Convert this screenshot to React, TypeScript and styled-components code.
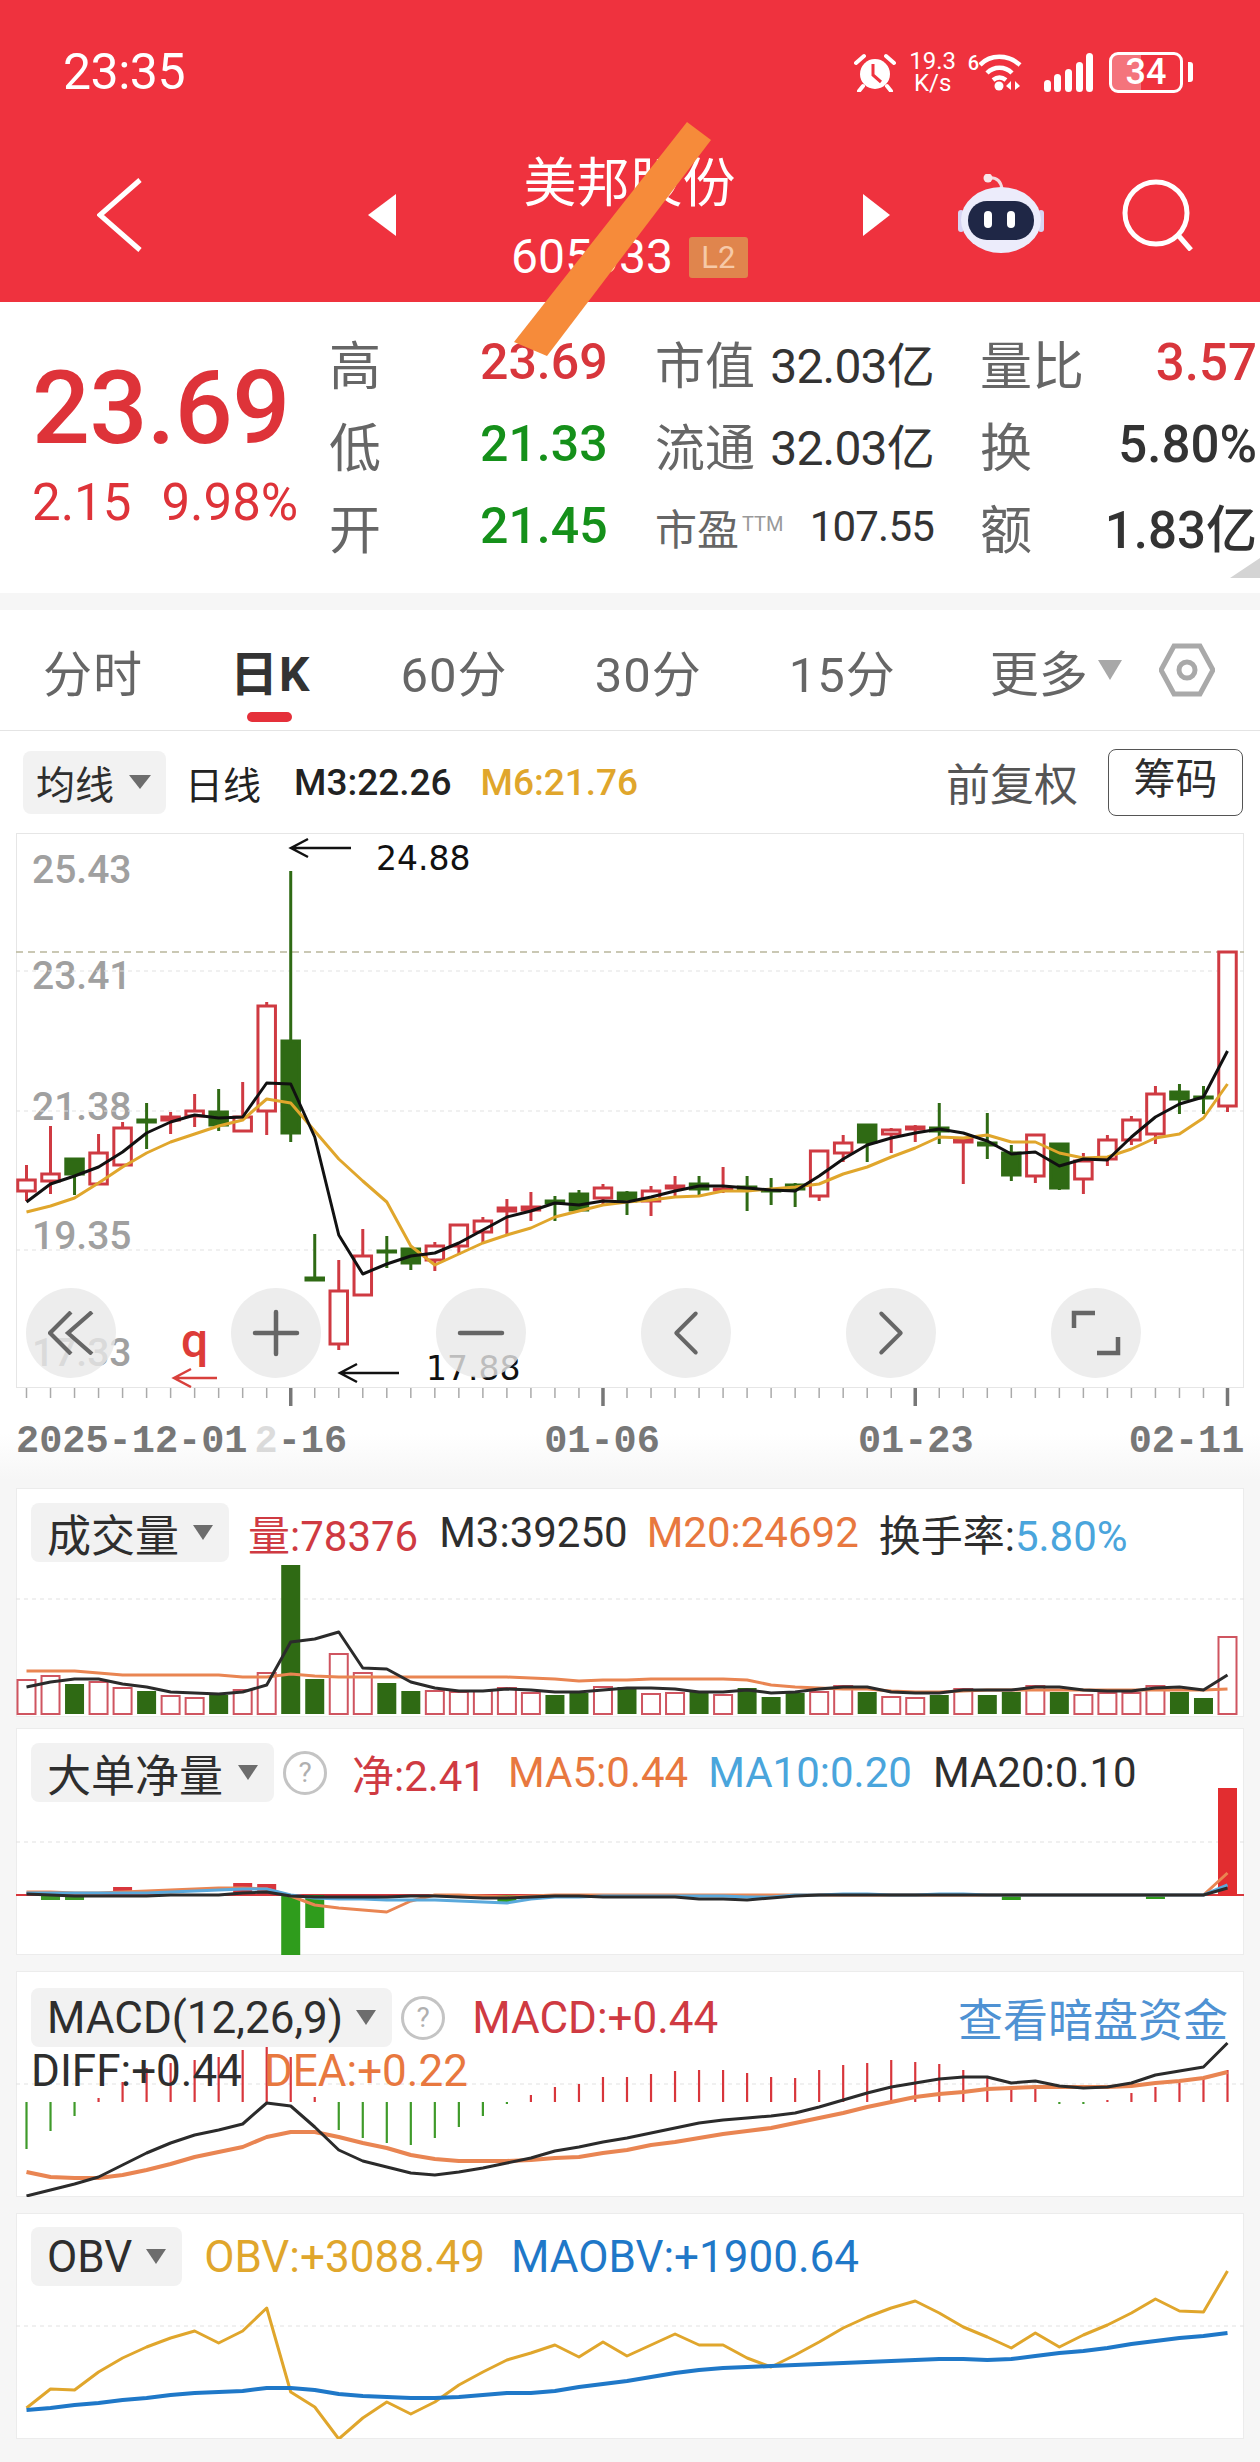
import styled, { createGlobalStyle } from 'styled-components';
import { ChevronLeft, ChevronRight, Minus, Plus } from 'lucide-react';

const GlobalStyle = createGlobalStyle`
	html, body { margin: 0; padding: 0; background: #f6f6f6; }
	body { font-family: Roboto, "Noto Sans CJK SC", sans-serif; }
`;

const RED = '#cf3a42';
const GREEN = '#2f6a14';
const ORANGE = '#e8783f';
const SKY = '#4aa5dc';
const INK = '#2e2e2e';
const GOLD = '#e0a62c';

const X = (i: number) => 26.5 + i * 24.02;
const pts = (ys: number[]) => ys.map((y, i) => `${X(i)},${y}`).join(' ');

type Candle = ['r' | 'g', number, number, number, number];

const candles: Candle[] = [
	['r', 1180, 1191, 1165, 1201], ['r', 1174, 1181, 1126, 1194], ['g', 1159, 1174, 1159, 1195],
	['r', 1153, 1184, 1134, 1184], ['r', 1128, 1165, 1122, 1165], ['g', 1120, 1122, 1103, 1149],
	['r', 1117, 1120, 1112, 1134], ['r', 1111, 1116, 1094, 1127], ['g', 1112, 1125, 1089, 1131],
	['r', 1117, 1131, 1082, 1131], ['r', 1006, 1111, 1002, 1135], ['g', 1041, 1133, 871, 1142],
	['g', 1278, 1280, 1234, 1280], ['r', 1291, 1344, 1260, 1350], ['r', 1256, 1295, 1229, 1295],
	['g', 1251, 1252, 1236, 1268], ['g', 1249, 1263, 1249, 1270], ['r', 1246, 1260, 1242, 1271],
	['r', 1225, 1246, 1225, 1255], ['r', 1221, 1232, 1217, 1243], ['r', 1208, 1211, 1199, 1235],
	['r', 1207, 1210, 1192, 1221], ['g', 1201, 1203, 1196, 1221], ['g', 1194, 1210, 1190, 1212],
	['r', 1188, 1198, 1184, 1204], ['g', 1193, 1201, 1191, 1215], ['r', 1191, 1201, 1186, 1216],
	['r', 1186, 1188, 1176, 1197], ['g', 1184, 1189, 1176, 1196], ['r', 1189, 1190, 1167, 1193],
	['g', 1187, 1189, 1176, 1211], ['g', 1190, 1191, 1178, 1205], ['g', 1185, 1189, 1183, 1207],
	['r', 1151, 1196, 1151, 1201], ['r', 1143, 1153, 1135, 1162], ['g', 1125, 1142, 1125, 1162],
	['r', 1130, 1134, 1128, 1153], ['r', 1127, 1129, 1125, 1142], ['g', 1128, 1131, 1103, 1144],
	['r', 1139, 1142, 1137, 1184], ['g', 1143, 1145, 1113, 1159], ['g', 1153, 1175, 1145, 1181],
	['r', 1135, 1176, 1135, 1183], ['g', 1144, 1188, 1144, 1190], ['r', 1161, 1179, 1153, 1194],
	['r', 1140, 1159, 1135, 1166], ['r', 1120, 1140, 1116, 1145], ['r', 1094, 1134, 1086, 1144],
	['g', 1092, 1099, 1084, 1114], ['g', 1097, 1098, 1086, 1114], ['r', 952, 1106, 952, 1112],
];

const m3 = [1202, 1184, 1176, 1167, 1152, 1133, 1122, 1115, 1118, 1117, 1083, 1084, 1137, 1235, 1274, 1264, 1256, 1253, 1243, 1230, 1217, 1211, 1203, 1205, 1201, 1202, 1197, 1191, 1186, 1186, 1188, 1190, 1191, 1176, 1159, 1145, 1138, 1133, 1129, 1133, 1141, 1154, 1152, 1166, 1159, 1160, 1137, 1117, 1104, 1097, 1051];
const m6 = [1212, 1206, 1198, 1183, 1167, 1153, 1142, 1134, 1126, 1120, 1099, 1103, 1131, 1159, 1181, 1202, 1246, 1265, 1254, 1243, 1235, 1228, 1217, 1211, 1205, 1202, 1200, 1197, 1196, 1191, 1191, 1189, 1187, 1184, 1174, 1167, 1157, 1148, 1137, 1138, 1135, 1142, 1142, 1153, 1158, 1157, 1149, 1138, 1134, 1118, 1084];

const volTops = [1680, 1676, 1684, 1682, 1688, 1691, 1696, 1698, 1695, 1690, 1673, 1565, 1679, 1654, 1673, 1683, 1691, 1691, 1692, 1691, 1688, 1693, 1695, 1693, 1687, 1687, 1694, 1693, 1692, 1695, 1688, 1697, 1693, 1692, 1686, 1692, 1697, 1698, 1695, 1689, 1695, 1692, 1686, 1692, 1695, 1693, 1693, 1686, 1692, 1698, 1637];
const volGreen = new Set([2, 5, 8, 11, 12, 15, 16, 22, 23, 25, 28, 30, 31, 32, 35, 38, 40, 41, 43, 48, 49]);
const volM3 = [1687, 1682, 1679, 1679, 1684, 1687, 1692, 1693, 1694, 1692, 1685, 1642, 1639, 1632, 1668, 1669, 1682, 1688, 1691, 1691, 1689, 1690, 1692, 1692, 1690, 1688, 1688, 1689, 1692, 1692, 1690, 1693, 1692, 1689, 1687, 1687, 1692, 1693, 1693, 1690, 1690, 1690, 1687, 1687, 1690, 1691, 1691, 1688, 1687, 1690, 1675];
const volM20 = [1671, 1671, 1671, 1673, 1675, 1675, 1675, 1675, 1675, 1677, 1677, 1674, 1676, 1677, 1677, 1677, 1677, 1677, 1677, 1677, 1677, 1678, 1679, 1681, 1680, 1680, 1679, 1679, 1679, 1679, 1680, 1685, 1687, 1688, 1689, 1689, 1691, 1692, 1692, 1691, 1690, 1690, 1690, 1690, 1690, 1690, 1690, 1690, 1690, 1690, 1689];

const netBars: [number, number, number, string][] = [
	[1, 1895, 1900, '#3f9a2a'], [2, 1895, 1900, '#3f9a2a'], [4, 1887, 1895, '#d8363c'], [9, 1883, 1895, '#d8363c'],
	[10, 1884, 1895, '#d8363c'], [11, 1895, 1955, '#2f9c1c'], [12, 1895, 1928, '#2f9c1c'], [20, 1895, 1902, '#2f9c1c'],
	[41, 1895, 1900, '#2f9c1c'], [47, 1895, 1899, '#2f9c1c'], [50, 1788, 1896, '#e22d30'],
];
const netMa5 = [1892, 1892, 1893, 1893, 1892, 1891, 1890, 1889, 1888, 1888, 1889, 1896, 1905, 1908, 1910, 1912, 1901, 1895, 1895, 1896, 1897, 1896, 1895, 1895, 1895, 1895, 1895, 1895, 1895, 1895, 1895, 1895, 1895, 1895, 1895, 1895, 1895, 1895, 1895, 1895, 1895, 1895, 1895, 1895, 1895, 1895, 1895, 1895, 1895, 1895, 1873];
const netMa10 = [1893, 1893, 1893, 1893, 1893, 1893, 1892, 1891, 1890, 1889, 1889, 1895, 1898, 1899, 1899, 1900, 1900, 1900, 1901, 1902, 1903, 1899, 1897, 1897, 1896, 1896, 1896, 1896, 1896, 1896, 1897, 1897, 1895, 1895, 1894, 1894, 1895, 1895, 1894, 1894, 1895, 1895, 1895, 1895, 1895, 1895, 1895, 1895, 1895, 1895, 1885];
const netMa20 = [1894, 1895, 1896, 1896, 1896, 1896, 1895, 1895, 1895, 1893, 1892, 1896, 1897, 1897, 1897, 1897, 1896, 1896, 1897, 1898, 1898, 1897, 1896, 1896, 1897, 1897, 1897, 1897, 1899, 1899, 1900, 1898, 1896, 1895, 1895, 1895, 1895, 1895, 1895, 1895, 1895, 1895, 1895, 1895, 1895, 1895, 1895, 1895, 1895, 1895, 1888];

const hist = [2149, 2131, 2116, 2098, 2082, 2068, 2063, 2060, 2057, 2050, 2033, 2057, 2097, 2130, 2138, 2143, 2145, 2138, 2127, 2116, 2104, 2095, 2087, 2084, 2077, 2077, 2074, 2071, 2070, 2070, 2073, 2077, 2078, 2070, 2065, 2063, 2060, 2062, 2064, 2070, 2077, 2088, 2087, 2104, 2104, 2100, 2093, 2087, 2083, 2077, 2070];
const diff = [2196, 2190, 2184, 2177, 2165, 2153, 2143, 2135, 2130, 2124, 2103, 2106, 2127, 2150, 2161, 2167, 2173, 2175, 2172, 2168, 2163, 2158, 2151, 2147, 2142, 2138, 2133, 2128, 2123, 2120, 2118, 2116, 2113, 2107, 2100, 2093, 2087, 2083, 2079, 2077, 2077, 2083, 2081, 2086, 2088, 2087, 2083, 2075, 2071, 2067, 2043];
const dea = [2172, 2177, 2178, 2178, 2175, 2170, 2164, 2157, 2152, 2147, 2137, 2132, 2132, 2137, 2143, 2148, 2155, 2159, 2161, 2161, 2161, 2160, 2158, 2157, 2153, 2150, 2145, 2142, 2138, 2134, 2131, 2128, 2123, 2118, 2113, 2107, 2102, 2097, 2094, 2092, 2089, 2088, 2087, 2087, 2087, 2087, 2086, 2083, 2081, 2078, 2072];

const obv = [2408, 2389, 2390, 2372, 2358, 2347, 2338, 2331, 2343, 2331, 2308, 2392, 2407, 2439, 2418, 2402, 2414, 2402, 2385, 2372, 2360, 2353, 2345, 2357, 2342, 2356, 2345, 2334, 2345, 2345, 2358, 2367, 2355, 2342, 2328, 2317, 2308, 2301, 2313, 2327, 2337, 2348, 2333, 2347, 2335, 2325, 2313, 2299, 2311, 2312, 2271];
const maobv = [2410, 2408, 2405, 2403, 2400, 2398, 2395, 2393, 2392, 2391, 2388, 2388, 2390, 2394, 2396, 2397, 2398, 2398, 2397, 2395, 2393, 2393, 2391, 2387, 2384, 2381, 2377, 2373, 2370, 2368, 2367, 2366, 2365, 2364, 2363, 2362, 2361, 2360, 2359, 2359, 2360, 2359, 2356, 2353, 2351, 2348, 2344, 2341, 2338, 2336, 2333];

const Page = styled.div`
	position: relative;
	width: 1260px;
	height: 2462px;
	overflow: hidden;
	background: #f6f6f6;
	color: ${INK};
`;

const Header = styled.header`
	height: 302px;
	background: #ef323e;
	color: #fff;
`;

const StatusBar = styled.div`
	height: 144px;
	display: flex;
	align-items: center;
	padding-left: 63px;
`;

const Clock = styled.span`
	font-size: 50px;
	letter-spacing: -0.5px;
`;

const StatusIcons = styled.div`
	margin-left: auto;
	display: flex;
	align-items: center;
	padding-right: 67px;
`;

const Speed = styled.div`
	width: 50px;
	margin-left: 12px;
	font-size: 24px;
	line-height: 22px;
	text-align: center;
`;

const SimMark = styled.span`
	align-self: flex-start;
	margin: 2px 0 0 10px;
	font-size: 20px;
	font-weight: 500;
	line-height: 22px;
`;

const Battery = styled.div`
	position: relative;
	width: 74px;
	height: 41px;
	margin-left: 16px;
	box-sizing: border-box;
	border: 3px solid #fff;
	border-radius: 9px;
	background: linear-gradient(90deg, rgba(255, 255, 255, 0.32) 42%, transparent 42%);
	font-size: 36px;
	font-weight: 500;
	line-height: 35px;
	text-align: center;
`;

const BatteryNub = styled.i`
	width: 5px;
	height: 20px;
	margin-left: 5px;
	background: #fff;
	border-radius: 0 3px 3px 0;
`;

const NavBar = styled.div`
	height: 158px;
	box-sizing: border-box;
	padding: 0 0 16px 97px;
	display: flex;
	align-items: center;
`;

const StockTitle = styled.div`
	width: 467px;
	align-self: flex-start;
	margin-top: 10px;
	display: flex;
	flex-direction: column;
	align-items: center;
`;

const StockName = styled.div`
	font-size: 53px;
	line-height: 60px;
`;

const CodeRow = styled.div`
	margin-top: 22px;
	display: flex;
	align-items: center;
	gap: 16px;
	font-size: 48px;
	line-height: 42px;
`;

const LevelBadge = styled.span`
	width: 59px;
	height: 41px;
	border-radius: 3px;
	background: #e0854d;
	color: #f6c9a8;
	font-size: 31px;
	line-height: 41px;
	text-align: center;
`;

const Arrow = styled.i<{ $right?: boolean; $gap: number }>`
	width: 0;
	height: 0;
	margin-left: ${(p) => p.$gap}px;
	border-style: solid;
	border-width: 21px 0 21px 0;
	border-color: transparent;
	${(p) => (p.$right ? 'border-left: 27px solid #fff;' : 'border-right: 28px solid #fff;')}
`;

const SlashMark = styled.svg`
	position: absolute;
	left: 0;
	top: 0;
	pointer-events: none;
`;

const QuotePanel = styled.section`
	height: 291px;
	display: flex;
	background: #fff;
	position: relative;
`;

const PriceBlock = styled.div`
	width: 329px;
	box-sizing: border-box;
	padding: 56px 0 0 32px;
	color: #de3339;
`;

const BigPrice = styled.div`
	font-size: 102px;
	font-weight: 500;
	line-height: 100px;
	letter-spacing: -0.5px;
`;

const ChangeRow = styled.div`
	margin-top: 20px;
	display: flex;
	gap: 30px;
	font-size: 51px;
	line-height: 50px;
	white-space: nowrap;
`;

const QuoteGrid = styled.div`
	padding-top: 19px;
	display: grid;
	grid-template-columns: 151px 175px 325px 280px;
	grid-auto-rows: 82px;
	align-items: center;
`;

const QuoteLabel = styled.span<{ $size?: number }>`
	font-size: ${(p) => p.$size ?? 52}px;
	color: #666;
	white-space: nowrap;
`;

const QuoteValue = styled.span<{ $color: string; $size?: number }>`
	font-size: ${(p) => p.$size ?? 50}px;
	font-weight: 500;
	color: ${(p) => p.$color};
`;

const MetricCell = styled.div`
	width: 279px;
	display: flex;
	align-items: center;
	justify-content: space-between;
	white-space: nowrap;
`;

const MetricValue = styled.span<{ $size?: number }>`
	font-size: ${(p) => p.$size ?? 48}px;
	color: #333;
	letter-spacing: -0.8px;
`;

const Ttm = styled.sup`
	font-size: 20px;
	color: #999;
	vertical-align: 14px;
	line-height: 0;
	margin-left: 3px;
`;

const RightCell = styled.div`
	width: 277px;
	display: flex;
	align-items: center;
	justify-content: space-between;
	white-space: nowrap;
`;

const CornerMark = styled.i`
	position: absolute;
	right: 0;
	bottom: 15px;
	width: 0;
	height: 0;
	border-left: 30px solid transparent;
	border-bottom: 20px solid #d4d4d4;
`;

const Tabs = styled.nav`
	margin-top: 17px;
	height: 121px;
	box-sizing: border-box;
	padding: 0 0 0 43px;
	display: flex;
	align-items: center;
	gap: 87px;
	background: #fff;
	border-bottom: 1px solid #e4e4e4;
	font-size: 49px;
	color: #666;
`;

const Tab = styled.span<{ $active?: boolean }>`
	position: relative;
	flex-shrink: 0;
	white-space: nowrap;
	letter-spacing: 1px;
	${(p) =>
		p.$active &&
		`
		margin-right: 3px;
		color: #333;
		font-weight: 700;
		font-size: 48px;
		&::after {
			content: '';
			position: absolute;
			left: 17px;
			top: 77px;
			width: 45px;
			height: 10px;
			border-radius: 5px;
			background: #e5303a;
		}
	`}
`;

const MoreTab = styled.span`
	margin-left: 7px;
	flex-shrink: 0;
	display: flex;
	align-items: center;
	gap: 10px;
	white-space: nowrap;
`;

const Caret = styled.i<{ $w: number; $h: number; $color?: string }>`
	display: inline-block;
	width: 0;
	height: 0;
	border-left: ${(p) => p.$w / 2}px solid transparent;
	border-right: ${(p) => p.$w / 2}px solid transparent;
	border-top: ${(p) => p.$h}px solid ${(p) => p.$color ?? '#6d6d6d'};
`;

const HexButton = styled.svg`
	flex-shrink: 0;
	margin-left: -50px;
`;

const ChartToolbar = styled.div`
	height: 102px;
	box-sizing: border-box;
	padding: 0 17px 0 23px;
	display: flex;
	align-items: center;
	background: #fff;
`;

const DropPill = styled.div<{ $gap: number }>`
	height: 59px;
	box-sizing: border-box;
	padding: 0 16px;
	display: flex;
	align-items: center;
	gap: ${(p) => p.$gap}px;
	border-radius: 8px;
	background: #f2f2f2;
	white-space: nowrap;
`;

const ToolbarPill = styled(DropPill)`
	height: 63px;
	padding: 0 15px 0 13px;
	font-size: 39px;
`;

const ToolbarText = styled.span<{ $color?: string; $gap: number; $size?: number }>`
	margin-left: ${(p) => p.$gap}px;
	font-size: ${(p) => p.$size ?? 37}px;
	font-weight: ${(p) => (p.$size ? 400 : 500)};
	color: ${(p) => p.$color ?? '#222'};
	white-space: nowrap;
`;

const AdjustText = styled.span`
	margin-left: auto;
	font-size: 44px;
	color: #555;
	white-space: nowrap;
`;

const ChipButton = styled.span`
	width: 135px;
	height: 67px;
	margin-left: 30px;
	box-sizing: border-box;
	border: 1.5px solid #555;
	border-radius: 8px;
	font-size: 42px;
	line-height: 60px;
	text-align: center;
`;

const Shell = styled.div`
	background: #fff;
	padding-left: 16px;
`;

const ChartBox = styled.div`
	position: relative;
	width: 1228px;
	height: 555px;
	box-shadow: inset 0 0 0 1px #e6e6e6;
`;

const PlotSvg = styled.svg`
	position: absolute;
	left: 0;
	top: 0;
	display: block;
`;

const PriceTick = styled.span<{ $top: number }>`
	position: absolute;
	left: 16px;
	top: ${(p) => p.$top}px;
	transform: translateY(-50%);
	font-size: 39px;
	font-weight: 500;
	color: #a0a0a0;
`;

const Note = styled.span<{ $left: number; $top: number; $color?: string }>`
	position: absolute;
	left: ${(p) => p.$left}px;
	top: ${(p) => p.$top}px;
	transform: translateY(-50%);
	font-family: "DejaVu Sans", sans-serif;
	font-size: 33px;
	color: ${(p) => p.$color ?? '#111'};
`;

const RedQ = styled(Note)`
	font-family: Roboto, sans-serif;
	font-size: 48px;
	font-weight: 500;
`;

const ControlRow = styled.div`
	position: absolute;
	left: 10px;
	top: 455px;
	width: 1115px;
	display: flex;
	justify-content: space-between;
`;

const RoundControl = styled.span`
	width: 90px;
	height: 90px;
	display: flex;
	align-items: center;
	justify-content: center;
	border-radius: 50%;
	background: rgba(232, 232, 232, 0.8);
	color: #666;
`;

const AxisStrip = styled.div`
	height: 92px;
	background: linear-gradient(#fff 50%, #f6f6f6);
`;

const TickSvg = styled.svg`
	display: block;
`;

const AxisDates = styled.div`
	margin-top: 12px;
	padding-left: 16px;
	display: flex;
	font-family: "Liberation Mono", monospace;
	font-size: 38.6px;
	font-weight: 700;
	line-height: 44px;
	color: #777;
`;

const AxisDate = styled.span<{ $gap?: number }>`
	margin-left: ${(p) => p.$gap ?? 0}px;
`;

const Faded = styled.span`
	opacity: 0.25;
`;

const Panel = styled.section<{ $height: number; $top: number }>`
	position: relative;
	width: 1228px;
	height: ${(p) => p.$height}px;
	margin: ${(p) => p.$top}px 0 0 16px;
	box-sizing: border-box;
	padding: 14px 0 0 15px;
	background: #fff;
	box-shadow: inset 0 0 0 1px #ececec;
`;

const PanelHead = styled.div<{ $size?: number }>`
	position: relative;
	display: flex;
	align-items: center;
	font-size: ${(p) => p.$size ?? 42}px;
`;

const PanelPill = styled(DropPill)`
	font-size: 44px;
`;

const Reading = styled.span<{ $color?: string; $gap: number }>`
	margin-left: ${(p) => p.$gap}px;
	color: ${(p) => p.$color ?? INK};
	white-space: nowrap;
`;

const HelpDot = styled.span`
	width: 44px;
	height: 44px;
	margin-left: 9px;
	box-sizing: border-box;
	border: 3px solid #c4c4c4;
	border-radius: 50%;
	color: #b0b0b0;
	font-size: 28px;
	line-height: 38px;
	text-align: center;
`;

const FundsLink = styled.span`
	margin-left: auto;
	padding-right: 16px;
	font-size: 45px;
	color: #4f92d3;
	white-space: nowrap;
`;

const SecondRow = styled.div`
	position: relative;
	display: flex;
	font-size: 44px;
	line-height: 43px;
`;

function Plot(props: { top: number; height: number; children: React.ReactNode }) {
	return (
		<PlotSvg width={1228} height={props.height} viewBox={`16 ${props.top} 1228 ${props.height}`} fill="none">
			{props.children}
		</PlotSvg>
	);
}

function GridLine(props: { y: number }) {
	return <line x1={16} x2={1244} y1={props.y} y2={props.y} stroke="#e2e2e2" strokeWidth={1.2} strokeDasharray="4 4" />;
}

function CandleMark(props: { candle: Candle; i: number }) {
	const [kind, top, bottom, wickTop, wickBottom] = props.candle;
	const color = kind === 'r' ? RED : GREEN;
	return (
		<g>
			<line x1={X(props.i)} x2={X(props.i)} y1={wickTop} y2={wickBottom} stroke={color} strokeWidth={3} />
			<rect
				x={X(props.i) - 8.75}
				y={top}
				width={17.5}
				height={bottom - top}
				fill={kind === 'r' ? '#fff' : GREEN}
				stroke={color}
				strokeWidth={3}
			/>
		</g>
	);
}

function ArrowLeft(props: { x1: number; x2: number; y: number; color: string }) {
	const { x1, x2, y, color } = props;
	return (
		<path d={`M${x1} ${y}H${x2}M${x2 + 17} ${y - 9}L${x2} ${y}L${x2 + 17} ${y + 9}`} stroke={color} strokeWidth={2.5} />
	);
}

function KlineChart() {
	return (
		<ChartBox>
			<PriceTick $top={37}>25.43</PriceTick>
			<PriceTick $top={143}>23.41</PriceTick>
			<PriceTick $top={274}>21.38</PriceTick>
			<PriceTick $top={403}>19.35</PriceTick>
			<PriceTick $top={520}>17.33</PriceTick>
			<Plot top={833} height={555}>
				<line x1={16} x2={1244} y1={952} y2={952} stroke="#b9b79c" strokeWidth={1.5} strokeDasharray="7 5" />
				<GridLine y={971} />
				<GridLine y={1111} />
				<GridLine y={1250} />
				{candles.map((c, i) => (
					<CandleMark key={i} candle={c} i={i} />
				))}
				<polyline points={pts(m6)} stroke={GOLD} strokeWidth={3} strokeLinejoin="round" />
				<polyline points={pts(m3)} stroke="#111" strokeWidth={3} strokeLinejoin="round" />
				<ArrowLeft x1={351} x2={291} y={848} color="#111" />
				<ArrowLeft x1={399} x2={340} y={1373} color="#111" />
				<ArrowLeft x1={217} x2={174} y={1378} color="#d8403c" />
			</Plot>
			<Note $left={360} $top={25}>24.88</Note>
			<Note $left={410} $top={535}>17.88</Note>
			<RedQ $left={165} $top={507} $color="#dd3c38">q</RedQ>
			<ControlRow>
				<RoundControl>
					<svg width="46" height="44" viewBox="0 0 46 44" fill="none" stroke="#666" strokeWidth="4.2">
						<path d="M23 1L2 22L23 43M44 1L20 22L44 43" />
					</svg>
				</RoundControl>
				<RoundControl><Plus size={72} strokeWidth={1.5} /></RoundControl>
				<RoundControl><Minus size={72} strokeWidth={1.5} /></RoundControl>
				<RoundControl><ChevronLeft size={78} strokeWidth={1.2} /></RoundControl>
				<RoundControl><ChevronRight size={78} strokeWidth={1.2} /></RoundControl>
				<RoundControl>
					<svg width="50" height="48" viewBox="0 0 50 48" fill="none" stroke="#666" strokeWidth="4.5">
						<path d="M3 19V4H24M47 28V44H26" />
					</svg>
				</RoundControl>
			</ControlRow>
		</ChartBox>
	);
}

export default function App() {
	return (
		<Page>
			<GlobalStyle />
			<Header>
				<StatusBar>
					<Clock>23:35</Clock>
					<StatusIcons>
						<svg width="42" height="39" viewBox="0 0 42 39" fill="none">
							<path d="M2 10L10 3M40 10L32 3M9 33L5 38M33 33L37 38" stroke="#fff" strokeWidth="4" strokeLinecap="round" />
							<circle cx="21" cy="21" r="15" fill="#fff" />
							<path d="M19 11V22L27 29" stroke="#ef323e" strokeWidth="3" />
						</svg>
						<Speed>19.3<br />K/s</Speed>
						<SimMark>6</SimMark>
						<svg width="44" height="38" viewBox="0 0 44 38" fill="none" stroke="#fff" strokeWidth="4.5">
							<path d="M1 12C11 1 29 1 41 12M8 20C15 13 26 13 33 20M14 27C18 24 23 24 27 27" />
							<circle cx="20" cy="33" r="4.5" fill="#fff" stroke="none" />
							<path d="M32 28L27 33L32 37ZM36 28L41 33L36 37Z" fill="#fff" stroke="none" />
						</svg>
						<svg style={{ marginLeft: 21 }} width="49" height="39" viewBox="0 0 49 39" fill="#fff">
							<rect x="0" y="27" width="7" height="12" rx="3.5" />
							<rect x="10" y="21" width="7" height="18" rx="3.5" />
							<rect x="21" y="16" width="7" height="23" rx="3.5" />
							<rect x="32" y="9" width="7" height="30" rx="3.5" />
							<rect x="42" y="0" width="7" height="39" rx="3.5" />
						</svg>
						<Battery>34</Battery>
						<BatteryNub />
					</StatusIcons>
				</StatusBar>
				<NavBar>
					<svg width="45" height="74" viewBox="0 0 45 74" fill="none" stroke="#fff" strokeWidth="5">
						<path d="M43 2L3 37L43 72" />
					</svg>
					<Arrow $gap={226} />
					<StockTitle>
						<StockName>美邦股份</StockName>
						<CodeRow>
							605033
							<LevelBadge>L2</LevelBadge>
						</CodeRow>
					</StockTitle>
					<Arrow $right $gap={0} />
					<svg style={{ marginLeft: 67 }} width="88" height="82" viewBox="0 0 88 82">
						<path d="M31 4C40 3 44 8 45 15" fill="none" stroke="#f3d9de" strokeWidth="3" />
						<circle cx="31" cy="4" r="4.5" fill="#f8e6e9" />
						<rect x="1" y="36" width="6" height="22" rx="3" fill="#d7d4f2" />
						<rect x="81" y="36" width="6" height="22" rx="3" fill="#d7d4f2" />
						<ellipse cx="44" cy="46" rx="40" ry="33" fill="#ececfb" />
						<rect x="11" y="27" width="66" height="39" rx="19" fill="#1f2746" />
						<rect x="27" y="37" width="8" height="17" rx="4" fill="#fff" />
						<rect x="50" y="37" width="8" height="17" rx="4" fill="#fff" />
					</svg>
					<svg style={{ marginLeft: 77 }} width="72" height="72" viewBox="0 0 72 72" fill="none" stroke="#fff" strokeWidth="5">
						<circle cx="34" cy="34" r="31" />
						<path d="M56 56L69 71" />
					</svg>
				</NavBar>
			</Header>
			<QuotePanel>
				<PriceBlock>
					<BigPrice>23.69</BigPrice>
					<ChangeRow>
						<span>2.15</span>
						<span>9.98%</span>
					</ChangeRow>
				</PriceBlock>
				<QuoteGrid>
					<QuoteLabel>高</QuoteLabel>
					<QuoteValue $color="#d8363c">23.69</QuoteValue>
					<MetricCell>
						<QuoteLabel $size={50}>市值</QuoteLabel>
						<MetricValue>32.03亿</MetricValue>
					</MetricCell>
					<RightCell>
						<QuoteLabel>量比</QuoteLabel>
						<QuoteValue $color="#d8363c" $size={51}>3.57</QuoteValue>
					</RightCell>
					<QuoteLabel>低</QuoteLabel>
					<QuoteValue $color="#15901a">21.33</QuoteValue>
					<MetricCell>
						<QuoteLabel $size={50}>流通</QuoteLabel>
						<MetricValue>32.03亿</MetricValue>
					</MetricCell>
					<RightCell>
						<QuoteLabel>换</QuoteLabel>
						<QuoteValue $color="#333" $size={51}>5.80%</QuoteValue>
					</RightCell>
					<QuoteLabel>开</QuoteLabel>
					<QuoteValue $color="#15901a">21.45</QuoteValue>
					<MetricCell>
						<QuoteLabel $size={42}>市盈<Ttm>TTM</Ttm></QuoteLabel>
						<MetricValue $size={42}>107.55</MetricValue>
					</MetricCell>
					<RightCell>
						<QuoteLabel>额</QuoteLabel>
						<QuoteValue $color="#333" $size={51}>1.83亿</QuoteValue>
					</RightCell>
				</QuoteGrid>
				<CornerMark />
			</QuotePanel>
			<Tabs>
				<Tab>分时</Tab>
				<Tab $active>日K</Tab>
				<Tab>60分</Tab>
				<Tab>30分</Tab>
				<Tab>15分</Tab>
				<MoreTab>
					更多
					<Caret $w={25} $h={20} $color="#a8a8a8" />
				</MoreTab>
				<HexButton width="56" height="54" viewBox="0 0 56 54" fill="none" stroke="#a9a9a9" strokeWidth="5">
					<path d="M15 3H41L54 27L41 51H15L2 27Z" />
					<circle cx="28" cy="27" r="8" />
				</HexButton>
			</Tabs>
			<ChartToolbar>
				<ToolbarPill $gap={15}>
					均线
					<Caret $w={22} $h={14} />
				</ToolbarPill>
				<ToolbarText $gap={19} $size={38}>日线</ToolbarText>
				<ToolbarText $gap={33}>M3:22.26</ToolbarText>
				<ToolbarText $gap={29} $color={GOLD}>M6:21.76</ToolbarText>
				<AdjustText>前复权</AdjustText>
				<ChipButton>筹码</ChipButton>
			</ChartToolbar>
			<Shell>
				<KlineChart />
			</Shell>
			<AxisStrip>
				<TickSvg width="1260" height="20" viewBox="0 0 1260 20">
					{candles.map((_, i) => {
						const major = i === 11 || i === 24 || i === 37 || i === 50;
						return (
							<line
								key={i}
								x1={X(i)}
								x2={X(i)}
								y1={0}
								y2={major ? 18 : 10}
								strokeWidth={major ? 3.5 : 1.5}
								stroke={major ? '#777' : '#aaa'}
							/>
						);
					})}
				</TickSvg>
				<AxisDates>
					<AxisDate>2025-12-01</AxisDate>
					<AxisDate $gap={7}><Faded>2</Faded>-16</AxisDate>
					<AxisDate $gap={197}>01-06</AxisDate>
					<AxisDate $gap={198}>01-23</AxisDate>
					<AxisDate $gap={155}>02-11</AxisDate>
				</AxisDates>
			</AxisStrip>

			<Panel $height={229} $top={8}>
				<Plot top={1488} height={229}>
					<GridLine y={1599} />
					{volTops.map((top, i) =>
						volGreen.has(i) ? (
							<rect key={i} x={X(i) - 9.5} y={top} width={19} height={1714 - top} fill={GREEN} />
						) : (
							<rect key={i} x={X(i) - 9} y={top} width={18} height={1714 - top} fill="#fff" stroke="#cf5560" strokeWidth={2} />
						)
					)}
					<polyline points={pts(volM20)} stroke="#e98552" strokeWidth={3} strokeLinejoin="round" />
					<polyline points={pts(volM3)} stroke="#2b2b2b" strokeWidth={3} strokeLinejoin="round" />
				</Plot>
				<PanelHead>
					<PanelPill $gap={14}>
						成交量
						<Caret $w={21} $h={15} />
					</PanelPill>
					<Reading $gap={19} $color={RED}>量:78376</Reading>
					<Reading $gap={21}>M3:39250</Reading>
					<Reading $gap={19} $color={ORANGE}>M20:24692</Reading>
					<Reading $gap={20}>换手率:<span style={{ color: SKY }}>5.80%</span></Reading>
				</PanelHead>
			</Panel>

			<Panel $height={227} $top={11}>
				<Plot top={1728} height={227}>
					<GridLine y={1842} />
					<line x1={16} x2={1244} y1={1895} y2={1895} stroke="#d8363c" strokeWidth={2} />
					{netBars.map(([i, top, bottom, fill]) => (
						<rect key={i} x={X(i) - 9.5} y={top} width={19} height={bottom - top} fill={fill} />
					))}
					<polyline points={pts(netMa5)} stroke="#e98552" strokeWidth={3} strokeLinejoin="round" />
					<polyline points={pts(netMa10)} stroke="#5aa9dc" strokeWidth={3} strokeLinejoin="round" />
					<polyline points={pts(netMa20)} stroke="#2b2b2b" strokeWidth={3} strokeLinejoin="round" />
				</Plot>
				<PanelHead>
					<PanelPill $gap={15}>
						大单净量
						<Caret $w={21} $h={15} />
					</PanelPill>
					<HelpDot>?</HelpDot>
					<Reading $gap={25} $color={RED}>净:2.41</Reading>
					<Reading $gap={22} $color={ORANGE}>MA5:0.44</Reading>
					<Reading $gap={20} $color={SKY}>MA10:0.20</Reading>
					<Reading $gap={21}>MA20:0.10</Reading>
				</PanelHead>
			</Panel>

			<Panel $height={226} $top={16}>
				<Plot top={1971} height={226}>
					<GridLine y={2084} />
					{hist.map((y, i) => (
						<line
							key={i}
							x1={X(i)}
							x2={X(i)}
							y1={2102}
							y2={y}
							stroke={y > 2102 ? '#3f9a2a' : '#d8363c'}
							strokeWidth={2.2}
						/>
					))}
					<polyline points={pts(dea)} stroke="#e98552" strokeWidth={4} strokeLinejoin="round" />
					<polyline points={pts(diff)} stroke="#2b2b2b" strokeWidth={3} strokeLinejoin="round" />
				</Plot>
				<PanelHead $size={44}>
					<PanelPill $gap={13}>
						MACD(12,26,9)
						<Caret $w={21} $h={15} />
					</PanelPill>
					<HelpDot>?</HelpDot>
					<Reading $gap={27} $color={RED}>MACD:+0.44</Reading>
					<FundsLink>查看暗盘资金</FundsLink>
				</PanelHead>
				<SecondRow>
					<Reading $gap={0}>DIFF:+0.44</Reading>
					<Reading $gap={22} $color={ORANGE}>DEA:+0.22</Reading>
				</SecondRow>
			</Panel>

			<Panel $height={226} $top={16}>
				<Plot top={2213} height={226}>
					<GridLine y={2326} />
					<polyline points={pts(obv)} stroke={GOLD} strokeWidth={3} strokeLinejoin="round" />
					<polyline points={pts(maobv)} stroke="#1f78c8" strokeWidth={4} strokeLinejoin="round" />
				</Plot>
				<PanelHead $size={44}>
					<PanelPill $gap={14}>
						OBV
						<Caret $w={21} $h={15} />
					</PanelPill>
					<Reading $gap={22} $color={GOLD}>OBV:+3088.49</Reading>
					<Reading $gap={26} $color="#1f78c8">MAOBV:+1900.64</Reading>
				</PanelHead>
			</Panel>

			<SlashMark width="1260" height="400" viewBox="0 0 1260 400">
				<polygon points="687,122 711,140 547,356 514,342" fill="#f68b3a" />
			</SlashMark>
		</Page>
	);
}
